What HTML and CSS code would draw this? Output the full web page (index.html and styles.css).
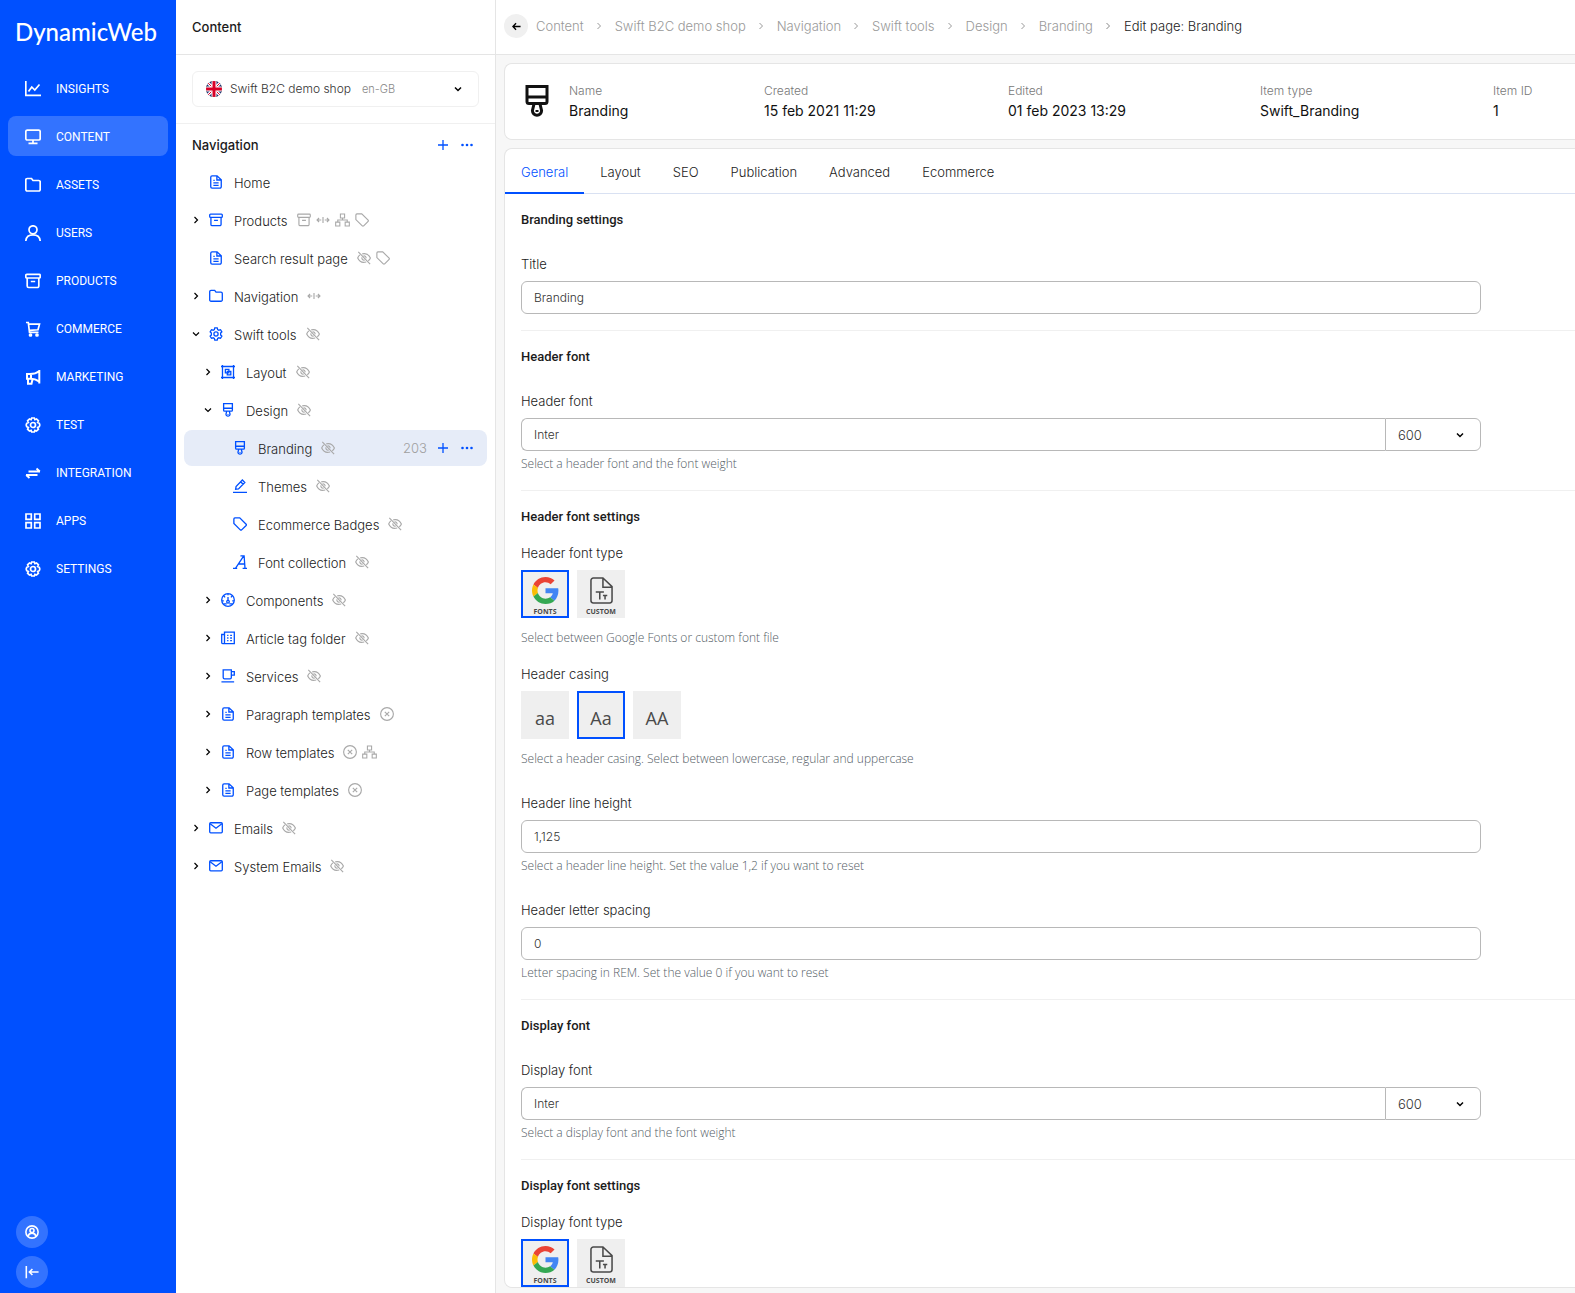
FILE: index.html
```html
<!DOCTYPE html>
<html lang="en">
<head>
<meta charset="utf-8">
<meta name="viewport" content="width=device-width, initial-scale=1">
<title>Edit page: Branding - DynamicWeb</title>
<link rel="stylesheet" href="styles.css">
</head>
<body>
<svg class="sprite" aria-hidden="true">
  <symbol id="i-insights" viewBox="0 0 16 16"><path d="M.8 0v14.4H16M3.5 10.5l3.300-4.500 3 3 4.700-5.500"/></symbol>
  <symbol id="i-screen" viewBox="0 0 16 16"><rect x=".8" y="1.200" width="14.400" height="9.800" rx="1.500"/><path d="M8 11v3.200M3.500 14.300h9"/></symbol>
  <symbol id="i-folder" viewBox="0 0 16 16"><path d="M.8 3a1.500 1.500 0 0 1 1.500-1.500h4.200l1.500 2h5.700a1.500 1.500 0 0 1 1.500 1.500v7.500a1.500 1.500 0 0 1-1.500 1.500H2.300a1.500 1.500 0 0 1-1.500-1.500z"/></symbol>
  <symbol id="i-user" viewBox="0 0 16 16"><circle cx="8" cy="4.800" r="4"/><path d="M.8 16c.3-4 3-6.200 7.200-6.200s6.900 2.200 7.200 6.200"/></symbol>
  <symbol id="i-box" viewBox="0 0 16 16"><rect x=".8" y="1.300" width="14.400" height="3.700" rx="1"/><path d="M2.200 5v8a1.500 1.500 0 0 0 1.500 1.500h8.600a1.500 1.500 0 0 0 1.500-1.500V5M5.800 8.500h4.400"/></symbol>
  <symbol id="i-cart" viewBox="0 0 16 16"><path d="M1 1.500h2.300l1.200 9.800h9M3.800 3.200h10.700l-1.500 5.600-8.500.5"/><circle cx="5.500" cy="14" r="1"/><circle cx="12" cy="14" r="1"/></symbol>
  <symbol id="i-horn" viewBox="0 0 16 16"><path d="M14.300 1v13.500M14 2.200C11.500 4.300 8.500 5 5 5H2v4.800h3c3.500 0 6.500.8 9 2.700M6 5v5M3 10v4.700h3.500L7.500 10.300" stroke-width="2"/></symbol>
  <symbol id="i-gear" viewBox="0 0 16 16"><path d="M6.700 1h2.600l.6 1.700 1.600-.7 1.900 1.800-.8 1.700 1.700.8.500 1.700-.5 1.700-1.700.8.800 1.700-1.900 1.800-1.600-.7-.6 1.700H6.700l-.6-1.700-1.600.7-1.900-1.800.8-1.700-1.700-.8L1.200 8l.5-1.700 1.700-.8-.8-1.700L4.500 2l1.600.7z"/><circle cx="8" cy="8" r="2.500"/></symbol>
  <symbol id="i-swap" viewBox="0 0 16 16"><path d="M3.500 6.500H15M11.500 3.500l3.300 3M12.500 10H1M1.200 10l3.300 3" stroke-width="1.900"/></symbol>
  <symbol id="i-apps" viewBox="0 0 16 16"><path d="M1 1h5.300v5.300H1zM9.700 1H15v5.300H9.700zM1 9.700h5.300V15H1zM9.700 9.700H15V15H9.700z"/></symbol>
  <symbol id="i-account" viewBox="0 0 16 16"><circle cx="8" cy="8" r="7"/><circle cx="8" cy="6.300" r="2.300"/><path d="M3.500 13c.5-2.500 2-3.700 4.500-3.700s4 1.200 4.500 3.700"/></symbol>
  <symbol id="i-collapse" viewBox="0 0 16 16"><path d="M1.500 1v14M15.500 8H5M8.500 4.500L5 8l3.500 3.500"/></symbol>
  <symbol id="i-page" viewBox="0 0 16 16"><path d="M3.500 1h5.700L14 5.500V13.500a1.500 1.500 0 0 1-1.500 1.500h-9A1.500 1.500 0 0 1 2 13.500v-11A1.500 1.500 0 0 1 3.500 1zM9 1v4.700h4.700M5 9h6M5 11.800h6M5 6.200h1.500"/></symbol>
  <symbol id="i-right" viewBox="0 0 8 8"><path d="M2.500 1l3 3-3 3"/></symbol>
  <symbol id="i-down" viewBox="0 0 8 8"><path d="M1 2.500l3 3 3-3"/></symbol>
  <symbol id="i-plus" viewBox="0 0 12 12"><path d="M6 1v10M1 6h10"/></symbol>
  <symbol id="i-dots" viewBox="0 0 12 12"><g fill="currentColor" stroke="none"><circle cx="1.500" cy="6" r="1.300"/><circle cx="6" cy="6" r="1.300"/><circle cx="10.500" cy="6" r="1.300"/></g></symbol>
  <symbol id="i-split" viewBox="0 0 16 16"><path d="M8 4.500v7M6 8H1.500M3.500 5.700L1.200 8l2.300 2.300M10 8h4.500M12.500 5.700L14.800 8l-2.300 2.300"/></symbol>
  <symbol id="i-tree" viewBox="0 0 18 16"><path d="M6.500.8h5v4.700h-5zM.8 10.500h5v4.700h-5zM12.200 10.500h5v4.700h-5zM9 5.500V8M3.300 10.500V8h11.400v2.500"/></symbol>
  <symbol id="i-tag" viewBox="0 0 16 16"><path d="M1 2.200A1.200 1.200 0 0 1 2.200 1h5.500L15 8.200a1.200 1.200 0 0 1 0 1.500L9.900 14.700a1.200 1.200 0 0 1-1.600 0L1 7.500z"/></symbol>
  <symbol id="i-hidden" viewBox="0 0 16 16"><path d="M1.500 1l13.500 14M6 3.300c5-1.300 8 2 9.300 4.700-.5 1.200-1.300 2.300-2.400 3.200M3.300 4.500C2.200 5.500 1.300 6.700.8 8c1.500 3.200 5 6 9.700 4.500M7.500 5.600c1.700-.3 3 1 2.900 2.700M5.700 7.200c-.6 2.100 1.200 3.700 3 3.200"/></symbol>
  <symbol id="i-cog" viewBox="0 0 16 16"><path d="M6.600 1h2.800l.5 2 1.300.7 2-.6 1.500 2.400L13.300 7v2l1.400 1.500-1.500 2.400-2-.6-1.300.7-.5 2H6.600l-.5-2-1.300-.7-2 .6-1.500-2.400L2.700 9V7L1.300 5.500l1.500-2.400 2 .6L6.100 3z"/><circle cx="8" cy="8" r="2.400"/></symbol>
  <symbol id="i-layout" viewBox="0 0 16 16"><path d="M1.700 0v16M14.300 0v16M0 1.700h16M0 14.300h16M5 5h4v4H5zM7.200 7.200h4v4h-4z"/></symbol>
  <symbol id="i-brush" viewBox="0 0 16 16"><path d="M3 .8h10v7.400a1 1 0 0 1-1 1H4a1 1 0 0 1-1-1zM3 6h10M6.500 9.500l-.8 3.300a2.300 2.300 0 1 0 4.600 0l-.8-3.300M8 12.500v1"/></symbol>
  <symbol id="i-pen" viewBox="0 0 16 16"><path d="M0 15.200h16M3 11.800l.5-3.300L10.700 1.200l2.800 2.800L6.300 11.300zM8.800 3.200l2.700 2.700"/></symbol>
  <symbol id="i-font" viewBox="0 0 16 16"><path d="M12.300 1L3 15M8.500 1h4.200l1 14M0 15.200h4.800M11 15.200h5M6 10.300h7"/></symbol>
  <symbol id="i-gauge" viewBox="0 0 16 16"><circle cx="8" cy="8" r="7.200"/><circle cx="8" cy="10" r="1.500"/><path d="M8 8.500V4.500M8 1v1.500M1.200 9h2M12.800 9h2M3.200 3.500l1.500 1.500M12.800 3.500l-1.500 1.500M3 12.500h3.500M9.500 12.500H13"/></symbol>
  <symbol id="i-news" viewBox="0 0 16 16"><path d="M4 1.200h11.200v13.300H2.300A1.500 1.500 0 0 1 .8 13V4H4zM4 4v9a1.500 1.500 0 0 1-1.500 1.500M7 5h1.500M10.500 5h2M7 8h1.500M10.500 8h2M7 11h1.500M10.500 11h2"/></symbol>
  <symbol id="i-cup" viewBox="0 0 16 16"><path d="M2.500 1h9.300v8.700a1.500 1.500 0 0 1-1.500 1.500H4a1.500 1.500 0 0 1-1.500-1.500zM12 3h3.200v4H12M.5 14.800h14.500"/></symbol>
  <symbol id="i-off" viewBox="0 0 16 16"><circle cx="8" cy="8" r="7.300"/><path d="M5.500 5.500l5 5M10.500 5.500l-5 5"/></symbol>
  <symbol id="i-mail" viewBox="0 0 16 16"><rect x=".8" y="2" width="14.400" height="11.500" rx="1.200"/><path d="M1.300 3.200L8 8.300l6.700-5.100"/></symbol>
  <symbol id="i-back" viewBox="0 0 10 10"><path d="M9.500 5H1.500M4.500 1.500L1 5l3.500 3.500"/></symbol>
  <symbol id="i-google" viewBox="0 0 48 48"><g stroke="none"><path fill="#EA4335" d="M24 9.500c3.540 0 6.710 1.220 9.210 3.600l6.850-6.850C35.900 2.380 30.470 0 24 0 14.620 0 6.510 5.380 2.560 13.220l7.980 6.190C12.430 13.720 17.740 9.500 24 9.500z"/><path fill="#4285F4" d="M46.980 24.550c0-1.570-.15-3.090-.38-4.550H24v9.020h12.940c-.58 2.960-2.260 5.480-4.780 7.180l7.730 6c4.510-4.180 7.090-10.360 7.090-17.650z"/><path fill="#FBBC05" d="M10.530 28.590c-.48-1.450-.76-2.990-.76-4.590s.27-3.140.76-4.590l-7.980-6.190C.92 16.460 0 20.120 0 24c0 3.880.92 7.540 2.560 10.780l7.970-6.190z"/><path fill="#34A853" d="M24 48c6.480 0 11.930-2.130 15.890-5.810l-7.730-6c-2.150 1.450-4.920 2.300-8.160 2.300-6.260 0-11.570-4.220-13.470-9.910l-7.980 6.190C6.510 42.620 14.620 48 24 48z"/></g></symbol>
  <symbol id="i-fontfile" viewBox="0 0 24 28"><path d="M4 1h9.500L23 10v14.500A2.500 2.500 0 0 1 20.500 27h-17A2.500 2.500 0 0 1 1 24.500v-21A2.500 2.500 0 0 1 3.500 1zM13.500 1v9.500H23M6 15.500h8.500M10.200 15.500v8M13.500 19.300h4.500M15.700 19.300v4.200"/></symbol>
</svg>

<div class="app">
  <aside class="rail">
    <a class="logo" href="#">DynamicWeb</a>
    <nav class="rail-nav" aria-label="Main">
      <a href="#"><svg><use href="#i-insights"/></svg>INSIGHTS</a>
      <a href="#" class="active" aria-current="page"><svg><use href="#i-screen"/></svg>CONTENT</a>
      <a href="#"><svg><use href="#i-folder"/></svg>ASSETS</a>
      <a href="#"><svg><use href="#i-user"/></svg>USERS</a>
      <a href="#"><svg><use href="#i-box"/></svg>PRODUCTS</a>
      <a href="#"><svg><use href="#i-cart"/></svg>COMMERCE</a>
      <a href="#"><svg><use href="#i-horn"/></svg>MARKETING</a>
      <a href="#"><svg><use href="#i-gear"/></svg>TEST</a>
      <a href="#"><svg><use href="#i-swap"/></svg>INTEGRATION</a>
      <a href="#"><svg><use href="#i-apps"/></svg>APPS</a>
      <a href="#"><svg><use href="#i-gear"/></svg>SETTINGS</a>
    </nav>
    <div class="rail-foot">
      <button type="button" aria-label="Account"><svg><use href="#i-account"/></svg></button>
      <button type="button" aria-label="Collapse menu"><svg><use href="#i-collapse"/></svg></button>
    </div>
  </aside>

  <section class="panel">
    <header class="panel-head"><h1>Content</h1></header>
    <div class="picker">
      <button type="button">
        <svg class="flag" viewBox="0 0 16 16"><clipPath id="fc"><circle cx="8" cy="8" r="8"/></clipPath><g clip-path="url(#fc)"><path fill="#1d2f6f" d="M0 0h16v16H0z"/><path stroke="#fff" stroke-width="3" d="M0 0l16 16M16 0L0 16"/><path stroke="#d80027" stroke-width="1" d="M0 0l16 16M16 0L0 16"/><path stroke="#fff" stroke-width="5" d="M8 0v16M0 8h16"/><path stroke="#d80027" stroke-width="3" d="M8 0v16M0 8h16"/></g></svg>
        <span>Swift B2C demo shop</span><small>en-GB</small>
        <svg class="chev"><use href="#i-down"/></svg>
      </button>
    </div>
    <div class="tree-head">
      <h2>Navigation</h2>
      <button type="button" aria-label="Add"><svg><use href="#i-plus"/></svg></button>
      <button type="button" aria-label="More"><svg><use href="#i-dots"/></svg></button>
    </div>
    <ul class="tree">
      <li><i></i><svg class="ic"><use href="#i-page"/></svg><a href="#">Home</a></li>
      <li><svg class="tg"><use href="#i-right"/></svg><svg class="ic"><use href="#i-box"/></svg><a href="#">Products</a><span class="marks"><svg><use href="#i-box"/></svg><svg><use href="#i-split"/></svg><svg class="wide"><use href="#i-tree"/></svg><svg><use href="#i-tag"/></svg></span></li>
      <li><i></i><svg class="ic"><use href="#i-page"/></svg><a href="#">Search result page</a><span class="marks"><svg><use href="#i-hidden"/></svg><svg><use href="#i-tag"/></svg></span></li>
      <li><svg class="tg"><use href="#i-right"/></svg><svg class="ic"><use href="#i-folder"/></svg><a href="#">Navigation</a><span class="marks"><svg><use href="#i-split"/></svg></span></li>
      <li><svg class="tg"><use href="#i-down"/></svg><svg class="ic"><use href="#i-cog"/></svg><a href="#">Swift tools</a><span class="marks"><svg><use href="#i-hidden"/></svg></span></li>
      <li class="l2"><svg class="tg"><use href="#i-right"/></svg><svg class="ic"><use href="#i-layout"/></svg><a href="#">Layout</a><span class="marks"><svg><use href="#i-hidden"/></svg></span></li>
      <li class="l2"><svg class="tg"><use href="#i-down"/></svg><svg class="ic"><use href="#i-brush"/></svg><a href="#">Design</a><span class="marks"><svg><use href="#i-hidden"/></svg></span></li>
      <li class="l3 selected"><i></i><svg class="ic"><use href="#i-brush"/></svg><a href="#" aria-current="page">Branding</a><span class="marks"><svg><use href="#i-hidden"/></svg></span><span class="num">203</span><button type="button" aria-label="Add"><svg><use href="#i-plus"/></svg></button><button type="button" aria-label="More"><svg><use href="#i-dots"/></svg></button></li>
      <li class="l3"><i></i><svg class="ic"><use href="#i-pen"/></svg><a href="#">Themes</a><span class="marks"><svg><use href="#i-hidden"/></svg></span></li>
      <li class="l3"><i></i><svg class="ic"><use href="#i-tag"/></svg><a href="#">Ecommerce Badges</a><span class="marks"><svg><use href="#i-hidden"/></svg></span></li>
      <li class="l3"><i></i><svg class="ic"><use href="#i-font"/></svg><a href="#">Font collection</a><span class="marks"><svg><use href="#i-hidden"/></svg></span></li>
      <li class="l2"><svg class="tg"><use href="#i-right"/></svg><svg class="ic"><use href="#i-gauge"/></svg><a href="#">Components</a><span class="marks"><svg><use href="#i-hidden"/></svg></span></li>
      <li class="l2"><svg class="tg"><use href="#i-right"/></svg><svg class="ic"><use href="#i-news"/></svg><a href="#">Article tag folder</a><span class="marks"><svg><use href="#i-hidden"/></svg></span></li>
      <li class="l2"><svg class="tg"><use href="#i-right"/></svg><svg class="ic"><use href="#i-cup"/></svg><a href="#">Services</a><span class="marks"><svg><use href="#i-hidden"/></svg></span></li>
      <li class="l2"><svg class="tg"><use href="#i-right"/></svg><svg class="ic"><use href="#i-page"/></svg><a href="#">Paragraph templates</a><span class="marks"><svg><use href="#i-off"/></svg></span></li>
      <li class="l2"><svg class="tg"><use href="#i-right"/></svg><svg class="ic"><use href="#i-page"/></svg><a href="#">Row templates</a><span class="marks"><svg><use href="#i-off"/></svg><svg class="wide"><use href="#i-tree"/></svg></span></li>
      <li class="l2"><svg class="tg"><use href="#i-right"/></svg><svg class="ic"><use href="#i-page"/></svg><a href="#">Page templates</a><span class="marks"><svg><use href="#i-off"/></svg></span></li>
      <li><svg class="tg"><use href="#i-right"/></svg><svg class="ic"><use href="#i-mail"/></svg><a href="#">Emails</a><span class="marks"><svg><use href="#i-hidden"/></svg></span></li>
      <li><svg class="tg"><use href="#i-right"/></svg><svg class="ic"><use href="#i-mail"/></svg><a href="#">System Emails</a><span class="marks"><svg><use href="#i-hidden"/></svg></span></li>
    </ul>
  </section>

  <main class="main">
    <nav class="crumbs" aria-label="Breadcrumb">
      <button type="button" aria-label="Back"><svg><use href="#i-back"/></svg></button>
      <ol>
        <li><a href="#">Content</a></li>
        <li><svg><use href="#i-right"/></svg><a href="#">Swift B2C demo shop</a></li>
        <li><svg><use href="#i-right"/></svg><a href="#">Navigation</a></li>
        <li><svg><use href="#i-right"/></svg><a href="#">Swift tools</a></li>
        <li><svg><use href="#i-right"/></svg><a href="#">Design</a></li>
        <li><svg><use href="#i-right"/></svg><a href="#">Branding</a></li>
        <li class="here" aria-current="page"><svg><use href="#i-right"/></svg>Edit page: Branding</li>
      </ol>
    </nav>
    <div class="work">
      <section class="card info">
        <svg><use href="#i-brush"/></svg>
        <dl>
          <div><dt>Name</dt><dd>Branding</dd></div>
          <div><dt>Created</dt><dd>15 feb 2021 11:29</dd></div>
          <div><dt>Edited</dt><dd>01 feb 2023 13:29</dd></div>
          <div><dt>Item type</dt><dd>Swift_Branding</dd></div>
          <div><dt>Item ID</dt><dd>1</dd></div>
        </dl>
      </section>
      <form class="card">
        <div class="tabs" role="tablist">
          <button type="button" role="tab" aria-selected="true">General</button>
          <button type="button" role="tab" aria-selected="false">Layout</button>
          <button type="button" role="tab" aria-selected="false">SEO</button>
          <button type="button" role="tab" aria-selected="false">Publication</button>
          <button type="button" role="tab" aria-selected="false">Advanced</button>
          <button type="button" role="tab" aria-selected="false">Ecommerce</button>
        </div>
        <section class="group">
          <h3>Branding settings</h3>
          <div class="field">
            <label for="title">Title</label>
            <input class="box" id="title" type="text" value="Branding">
          </div>
        </section>
        <section class="group">
          <h3>Header font</h3>
          <div class="field">
            <label for="hfont">Header font</label>
            <div class="joined">
              <input class="box" id="hfont" type="text" value="Inter">
              <div class="weight"><select class="box" aria-label="Header font weight"><option>600</option></select><svg><use href="#i-down"/></svg></div>
            </div>
            <p>Select a header font and the font weight</p>
          </div>
        </section>
        <section class="group">
          <h3>Header font settings</h3>
          <fieldset class="field">
            <legend>Header font type</legend>
            <div class="tiles">
              <label><input type="radio" name="htype" checked><svg class="g"><use href="#i-google"/></svg><b>FONTS</b></label>
              <label><input type="radio" name="htype"><svg class="f"><use href="#i-fontfile"/></svg><b>CUSTOM</b></label>
            </div>
            <p>Select between Google Fonts or custom font file</p>
          </fieldset>
          <fieldset class="field">
            <legend>Header casing</legend>
            <div class="tiles">
              <label><input type="radio" name="hcase"><span>aa</span></label>
              <label><input type="radio" name="hcase" checked><span>Aa</span></label>
              <label><input type="radio" name="hcase"><span>AA</span></label>
            </div>
            <p>Select a header casing. Select between lowercase, regular and uppercase</p>
          </fieldset>
          <div class="field">
            <label for="hline">Header line height</label>
            <input class="box" id="hline" type="text" value="1,125">
            <p>Select a header line height. Set the value 1,2 if you want to reset</p>
          </div>
          <div class="field">
            <label for="hspace">Header letter spacing</label>
            <input class="box" id="hspace" type="text" value="0">
            <p>Letter spacing in REM. Set the value 0 if you want to reset</p>
          </div>
        </section>
        <section class="group">
          <h3>Display font</h3>
          <div class="field">
            <label for="dfont">Display font</label>
            <div class="joined">
              <input class="box" id="dfont" type="text" value="Inter">
              <div class="weight"><select class="box" aria-label="Display font weight"><option>600</option></select><svg><use href="#i-down"/></svg></div>
            </div>
            <p>Select a display font and the font weight</p>
          </div>
        </section>
        <section class="group">
          <h3>Display font settings</h3>
          <fieldset class="field">
            <legend>Display font type</legend>
            <div class="tiles">
              <label><input type="radio" name="dtype" checked><svg class="g"><use href="#i-google"/></svg><b>FONTS</b></label>
              <label><input type="radio" name="dtype"><svg class="f"><use href="#i-fontfile"/></svg><b>CUSTOM</b></label>
            </div>
          </fieldset>
        </section>
      </form>
    </div>
  </main>
</div>
</body>
</html>
```
FILE: styles.css
```css
:root {
  --blue: #0050ff;
  --line: #e5e5e5;
  --text: #1b1b1b;
}
* { box-sizing: border-box; }
body, h1, h2, h3, p, ul, ol, dl, dd, fieldset { margin: 0; padding: 0; }
body {
  font: 300 13px/20px Inter, "Liberation Sans", sans-serif;
  color: var(--text);
  background: #f7f7f7;
}
ul, ol { list-style: none; }
a { color: inherit; text-decoration: none; }
button {
  padding: 0;
  border: 0;
  background: none;
  font: inherit;
  color: inherit;
  cursor: pointer;
}
svg {
  display: block;
  flex: none;
  fill: none;
  stroke: currentColor;
  stroke-width: 1.5;
}
.sprite { position: absolute; width: 0; height: 0; }

.app { display: flex; min-height: 100vh; }

/* Blue main menu */
.rail {
  display: flex;
  flex: none;
  flex-direction: column;
  width: 176px;
  background: var(--blue);
  color: #fff;
}
.logo {
  padding: 16px 15px 20px;
  font: 500 24px/32px Lato, sans-serif;
}
.rail-nav { display: flex; flex-direction: column; gap: 8px; padding: 0 8px; }
.rail-nav a {
  display: flex;
  align-items: center;
  gap: 15px;
  height: 40px;
  padding: 2px 0 0 17px;
  border-radius: 8px;
  font: 400 12px/20px Roboto, sans-serif;
}
.rail-nav .active { background: #3373ff; }
.rail-nav svg { width: 16px; height: 16px; stroke-width: 1.7; }
.rail-foot {
  display: flex;
  flex-direction: column;
  gap: 8px;
  margin-top: auto;
  padding: 16px 16px 5px;
}
.rail-foot button {
  display: grid;
  place-items: center;
  width: 32px;
  height: 32px;
  border-radius: 50%;
  background: #3373ff;
}
.rail-foot svg { width: 14px; height: 14px; stroke-width: 1.8; }

/* Content tree */
.panel {
  flex: none;
  width: 320px;
  border-right: 1px solid var(--line);
  background: #fff;
}
.panel-head, .crumbs {
  display: flex;
  align-items: center;
  height: 55px;
  border-bottom: 1px solid var(--line);
  background: #fff;
}
.panel-head { padding-left: 16px; }
h1, h2 { font-size: 13px; font-weight: 500; }
.picker { padding: 16px; border-bottom: 1px solid #f0f0f0; }
.picker button {
  display: flex;
  align-items: center;
  width: 100%;
  height: 36px;
  padding: 0 16px 0 13px;
  border: 1px solid #f0f0f0;
  border-radius: 6px;
  font-size: 12px;
  color: #333;
}
.picker small { margin-left: 11px; font-size: 11px; color: #888; }
.flag { width: 16px; height: 16px; margin-right: 8px; }
.chev { width: 8px; height: 8px; margin-left: auto; color: #000; }
.tree-head, .tree li { display: flex; align-items: center; height: 36px; }
.tree-head { margin: 3px 8px 1px; padding: 0 14px 0 8px; }
.tree-head h2 { flex: 1; }
.panel li button, .tree-head button { margin-left: 12px; color: var(--blue); }
.panel li .num + button { margin-left: 10px; }
.panel li button svg, .tree-head svg { width: 12px; height: 12px; stroke-width: 1.3; }
.tree { display: flex; flex-direction: column; gap: 2px; padding: 0 8px; color: #222; }
.tree li { padding: 0 14px 0 8px; border-radius: 8px; }
.tree a { padding-top: 2px; }
.tree .l2 { padding-left: 20px; }
.tree .l3 { padding-left: 32px; }
.tree .selected { background: #e6ecf8; }
.tree i, .tg { flex: none; width: 8px; height: 8px; }
.tg { color: #000; stroke-width: 1.2; }
.ic { width: 14px; height: 14px; margin: 0 11px 0 9px; color: var(--blue); }
.marks { display: flex; align-items: center; gap: 5px; margin-left: 9px; color: #a9a9a9; }
.marks svg { width: 14px; height: 14px; stroke-width: 1.3; }
.marks .wide { width: 15px; }
.num { margin-left: auto; color: #a0a0a0; }

/* Breadcrumb */
.main { flex: 1; min-width: 0; }
.crumbs { padding: 0 0 2px 8px; }
.crumbs button {
  display: grid;
  flex: none;
  place-items: center;
  width: 24px;
  height: 24px;
  margin-right: 8px;
  border-radius: 50%;
  background: #f0f0f0;
  color: #000;
}
.crumbs button svg { width: 9px; height: 9px; }
.crumbs ol { display: flex; white-space: nowrap; color: #999; }
.crumbs li { display: flex; align-items: center; }
.crumbs li svg { width: 8px; height: 8px; margin: 0 12px 0 11px; stroke-width: 1; }
.crumbs .here { color: var(--text); }
.crumbs .here svg { color: #888; }

/* Cards */
.work { padding: 8px 0 5px 8px; }
.card {
  border: 1px solid var(--line);
  border-right: 0;
  border-radius: 8px 0 0 8px;
  background: #fff;
}
.info {
  display: flex;
  align-items: center;
  margin-bottom: 8px;
  padding: 17px 0 18px 16px;
}
.info > svg { width: 32px; height: 32px; margin-right: 16px; color: #111; stroke-width: 1.5; }
.info dl {
  display: grid;
  flex: 1;
  grid-template-columns: 195fr 244fr 252fr 233fr 82fr;
}
.info dt { font-size: 12px; color: #777; }
.info dd { font-size: 14px; line-height: 20px; font-weight: 400; color: #111; }

.tabs { display: flex; height: 45px; border-bottom: 1px solid #d9e1f2; }
.tabs button {
  margin-bottom: -1px;
  padding: 3px 16px 0;
  border-bottom: 2px solid transparent;
  color: #222;
}
.tabs [aria-selected="true"] { border-color: var(--blue); color: var(--blue); }

/* Form */
.group { margin-left: 16px; padding: 16px 0; border-bottom: 1px solid #f0f0f0; }
.group:last-child { padding-bottom: 0; border-bottom: 0; }
h3 { font: 500 13px/20px Roboto, sans-serif; }
.field { max-width: 960px; margin-top: 24px; border: 0; }
fieldset.field { min-width: 0; margin-top: 16px; }
.field > label, legend { display: block; margin-bottom: 7px; padding: 0; }
.field p { margin-top: 3px; padding-bottom: 1px; font: 300 12px/19px "Open Sans", sans-serif; color: #535c65; }
fieldset.field p { margin-top: 10px; }
.box {
  display: block;
  width: 100%;
  height: 33px;
  padding: 0 12px;
  border: 1px solid #b8b8b8;
  border-radius: 6px;
  background: #fff;
  font: 300 12px/20px Inter, "Liberation Sans", sans-serif;
  color: #333;
  appearance: none;
}
.joined { display: flex; }
.joined > .box { border-right: 0; border-radius: 6px 0 0 6px; }
.weight { display: grid; flex: none; align-items: center; width: 96px; }
.weight > * { grid-area: 1 / 1; }
.weight select { border-radius: 0 6px 6px 0; font-size: 13px; }
.weight svg {
  justify-self: end;
  width: 8px;
  height: 8px;
  margin-right: 17px;
  color: #000;
  pointer-events: none;
}
.tiles { display: flex; gap: 8px; }
.tiles label {
  display: flex;
  flex-direction: column;
  align-items: center;
  justify-content: center;
  width: 48px;
  height: 48px;
  padding-top: 5px;
  background: #efefef;
  color: #4a4a4a;
}
.tiles label:has(:checked) { outline: 2px solid var(--blue); outline-offset: -2px; }
.tiles input { width: 0; height: 0; margin: 0; appearance: none; }
.tiles .g { width: 27px; height: 27px; }
.tiles .f { width: 23px; height: 27px; stroke-width: 1.6; }
.tiles b { margin-top: 3px; font: 700 7px/10px "Open Sans", sans-serif; }
.tiles span { font: 400 18px/24px "Open Sans", sans-serif; }
```
